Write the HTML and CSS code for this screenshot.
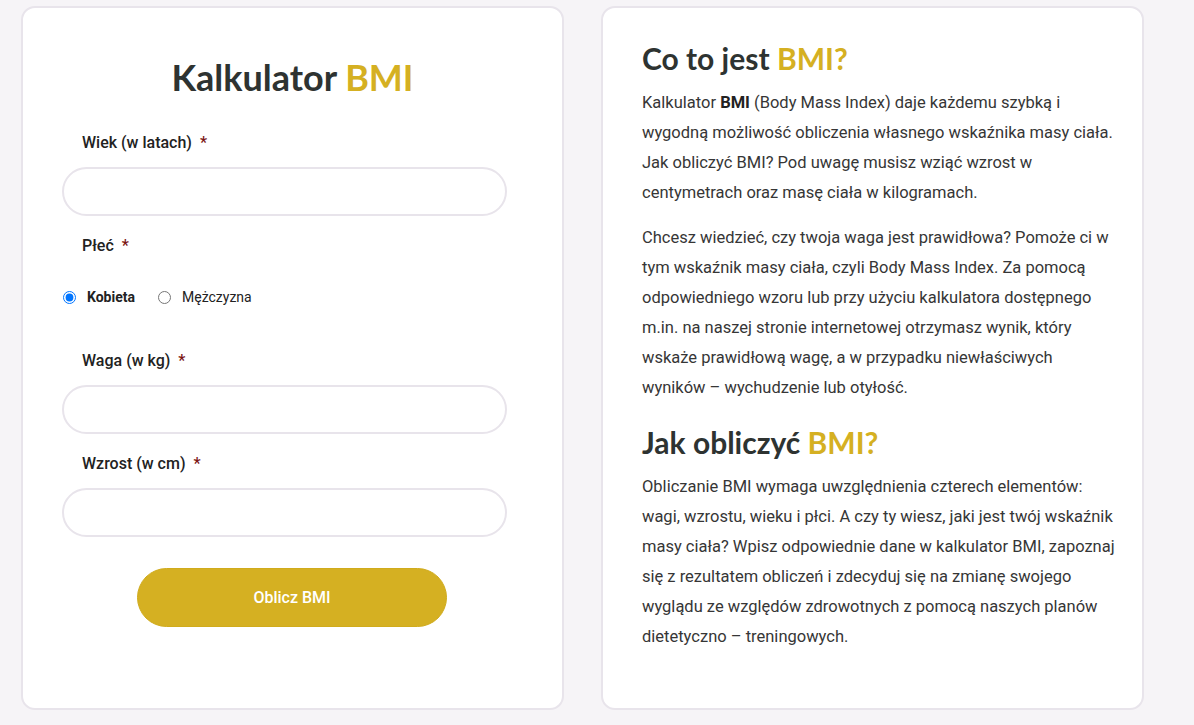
FILE: index.html
```html
<!DOCTYPE html>
<html lang="pl">
<head>
<meta charset="utf-8">
<title>Kalkulator BMI</title>
<link rel="stylesheet" href="styles.css">
</head>
<body>
<div class="page">
  <section class="card calc">
    <h1 class="title">Kalkulator <span class="accent">BMI</span></h1>
    <form class="form">
      <label class="label label-first" for="age">Wiek (w latach) <span class="req">*</span></label>
      <input class="field" id="age" type="text">
      <div class="label label-sex">Płeć <span class="req">*</span></div>
      <div class="radios">
        <label class="radio"><input type="radio" name="sex" checked><span class="radio-text strong">Kobieta</span></label>
        <label class="radio"><input type="radio" name="sex"><span class="radio-text">Mężczyzna</span></label>
      </div>
      <label class="label" for="weight">Waga (w kg) <span class="req">*</span></label>
      <input class="field" id="weight" type="text">
      <label class="label" for="height">Wzrost (w cm) <span class="req">*</span></label>
      <input class="field" id="height" type="text">
      <div class="actions"><button class="btn" type="button">Oblicz BMI</button></div>
    </form>
  </section>
  <section class="card info">
    <h2 class="heading">Co to jest <span class="accent">BMI?</span></h2>
    <p class="text">Kalkulator <strong>BMI</strong> (Body Mass Index) daje każdemu szybką i<br>wygodną możliwość obliczenia własnego wskaźnika masy ciała.<br>Jak obliczyć BMI? Pod uwagę musisz wziąć wzrost w<br>centymetrach oraz masę ciała w kilogramach.</p>
    <p class="text">Chcesz wiedzieć, czy twoja waga jest prawidłowa? Pomoże ci w<br>tym wskaźnik masy ciała, czyli Body Mass Index. Za pomocą<br>odpowiedniego wzoru lub przy użyciu kalkulatora dostępnego<br>m.in. na naszej stronie internetowej otrzymasz wynik, który<br>wskaże prawidłową wagę, a w przypadku niewłaściwych<br>wyników – wychudzenie lub otyłość.</p>
    <h2 class="heading heading-2">Jak obliczyć <span class="accent">BMI?</span></h2>
    <p class="text">Obliczanie BMI wymaga uwzględnienia czterech elementów:<br>wagi, wzrostu, wieku i płci. A czy ty wiesz, jaki jest twój wskaźnik<br>masy ciała? Wpisz odpowiednie dane w kalkulator BMI, zapoznaj<br>się z rezultatem obliczeń i zdecyduj się na zmianę swojego<br>wyglądu ze względów zdrowotnych z pomocą naszych planów<br>dietetyczno – treningowych.</p>
  </section>
</div>
</body>
</html>
```
FILE: styles.css
```css
* { box-sizing: border-box; }
html, body { margin: 0; padding: 0; }
body {
  background: #f6f4f7;
  font-family: Roboto, "Liberation Sans", sans-serif;
  color: #333;
  height: 725px;
  overflow: hidden;
}
.page {
  display: flex;
  gap: 37px;
  padding: 6px 0 0 21px;
}
.card {
  width: 543px;
  height: 704px;
  background: #fff;
  border: 2px solid #e8e4eb;
  border-radius: 14px;
}
.accent { color: #d5b022; }

/* calculator */
.calc { padding: 47px 0 0 39px; }
.title {
  margin: 0 0 0 -39px;
  text-align: center;
  font-family: Lato, "Open Sans", sans-serif;
  font-weight: 700;
  font-size: 36px;
  line-height: 44px;
  color: #2e3331;
}
.form {
  width: 445px;
  display: flex;
  flex-direction: column;
}
.label {
  display: block;
  margin: 0 0 12px 20px;
  font-size: 16px;
  font-weight: 500;
  line-height: 24px;
  color: #222;
}
.label-first { margin-top: 32px; }
.req { color: #7b1414; margin-left: 4px; }
.field {
  display: block;
  width: 445px;
  height: 49px;
  border: 2px solid #e8e4eb;
  border-radius: 25px;
  background: #fff;
  margin: 0 0 18px 0;
  outline: none;
}
.label-sex { margin-bottom: 30px; }
.radios {
  display: flex;
  align-items: center;
  height: 20px;
  gap: 22px;
  margin-top: -1px;
  margin-bottom: 42px;
}
.radio {
  display: flex;
  align-items: center;
  gap: 11px;
  font-size: 14px;
  color: #222;
}
.radio input { margin: 0 0 0 1px; width: 13px; height: 13px; }
.radio-text.strong { font-weight: 700; }
.actions {
  display: flex;
  justify-content: center;
  margin: 13px 0 0 0;
  padding-left: 15px;
}
.btn {
  width: 310px;
  height: 59px;
  border: 1px solid #d0ab1c;
  border-radius: 30px;
  background: #d5b022;
  color: #fff;
  font-family: Roboto, "Liberation Sans", sans-serif;
  font-size: 16px;
  font-weight: 500;
}

/* info */
.info { padding: 28px 0 0 39px; }
.heading {
  margin: 0;
  font-family: Lato, "Open Sans", sans-serif;
  font-weight: 700;
  font-size: 30px;
  line-height: 44px;
  color: #2e3331;
}
.heading-2 { margin-top: 17px; }
.text {
  width: 495px;
  margin: 8px 0 15px;
  font-size: 16.5px;
  line-height: 30px;
  color: #363636;
}
.text + .text { margin-top: 0; }
.text strong { font-weight: 700; color: #222; }
```
